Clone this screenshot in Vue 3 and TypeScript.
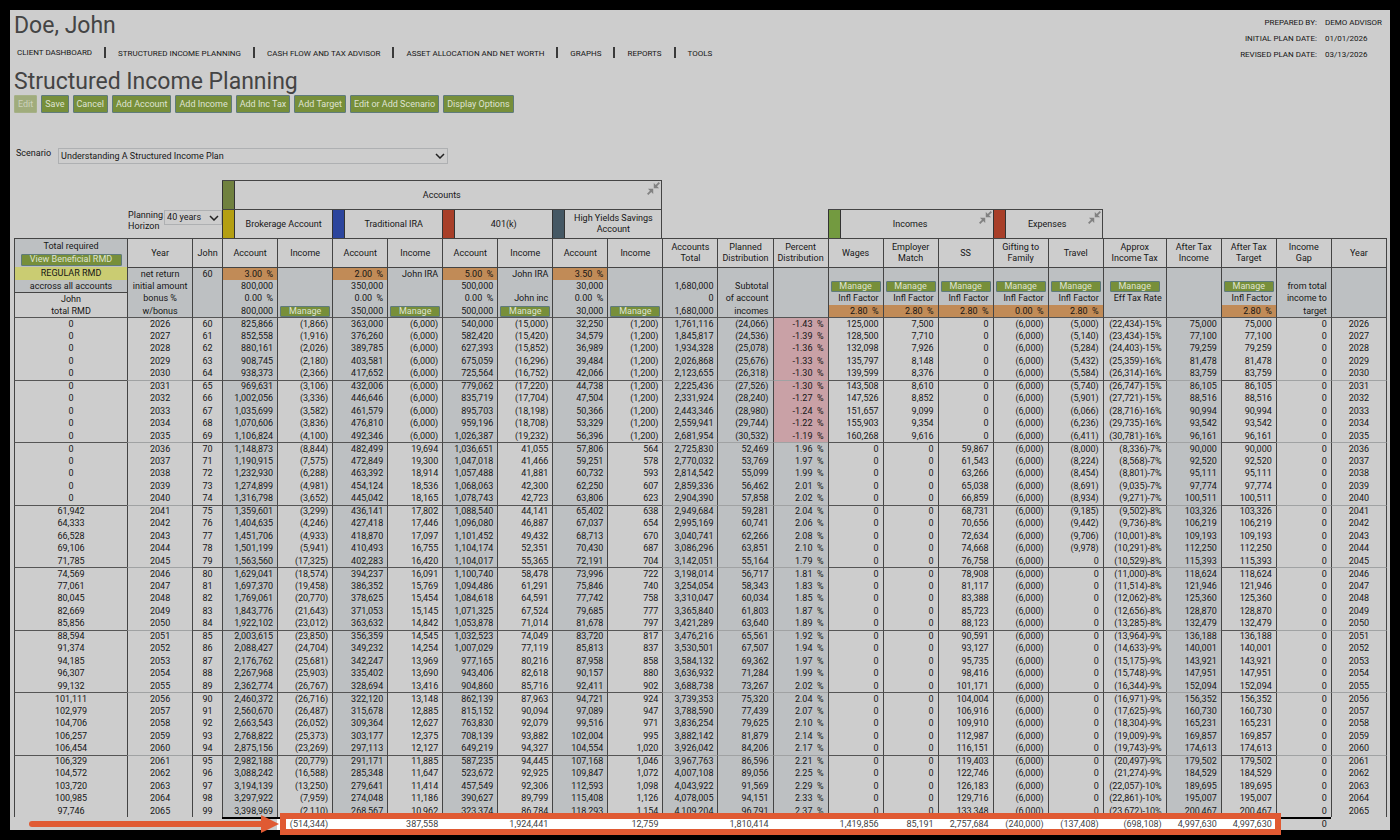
<script setup lang="ts">
import { ref } from 'vue'

interface Column {
  head: string[]
  kind: string
  setup: string[]
  foot: string
}

const menu: string[] = [
  'CLIENT DASHBOARD',
  'STRUCTURED INCOME PLANNING',
  'CASH FLOW AND TAX ADVISOR',
  'ASSET ALLOCATION AND NET WORTH',
  'GRAPHS',
  'REPORTS',
  'TOOLS',
]

const actions: string[] = [
  'Edit',
  'Save',
  'Cancel',
  'Add Account',
  'Add Income',
  'Add Inc Tax',
  'Add Target',
  'Edit or Add Scenario',
  'Display Options',
]

const scenario = ref('Understanding A Structured Income Plan')
const horizon = ref('40 years')

const M = 'Manage'
const F = 'Infl Factor'

const columns: Column[] = [
  { head: ['Year'], kind: 'year', setup: ['net return', 'initial amount', 'bonus %', 'w/bonus'], foot: '' },
  { head: ['John'], kind: 'age', setup: ['60', '', '', ''], foot: '' },
  { head: ['Account'], kind: 'money shade', setup: ['3.00  %', '800,000', '0.00  %', '800,000'], foot: '' },
  { head: ['Income'], kind: 'money', setup: ['', '', '', M], foot: '(514,344)' },
  { head: ['Account'], kind: 'money shade', setup: ['2.00  %', '350,000', '0.00  %', '350,000'], foot: '' },
  { head: ['Income'], kind: 'money', setup: ['John IRA', '', '', M], foot: '387,558' },
  { head: ['Account'], kind: 'money shade', setup: ['5.00  %', '500,000', '0.00  %', '500,000'], foot: '' },
  { head: ['Income'], kind: 'money', setup: ['John IRA', '', 'John inc', M], foot: '1,924,441' },
  { head: ['Account'], kind: 'money shade', setup: ['3.50  %', '30,000', '0.00  %', '30,000'], foot: '' },
  { head: ['Income'], kind: 'money', setup: ['', '', '', M], foot: '12,759' },
  { head: ['Accounts', 'Total'], kind: 'money shade soft', setup: ['', '1,680,000', '0', '1,680,000'], foot: '' },
  { head: ['Planned', 'Distribution'], kind: 'money shade soft', setup: ['', 'Subtotal', 'of account', 'incomes'], foot: '1,810,414' },
  { head: ['Percent', 'Distribution'], kind: 'money shade soft', setup: ['', '', '', ''], foot: '' },
  { head: ['Wages'], kind: 'money', setup: ['', M, F, '2.80  %'], foot: '1,419,856' },
  { head: ['Employer', 'Match'], kind: 'money', setup: ['', M, F, '2.80  %'], foot: '85,191' },
  { head: ['SS'], kind: 'money', setup: ['', M, F, '2.80  %'], foot: '2,757,684' },
  { head: ['Gifting to', 'Family'], kind: 'money', setup: ['', M, F, '0.00  %'], foot: '(240,000)' },
  { head: ['Travel'], kind: 'money', setup: ['', M, F, '2.80  %'], foot: '(137,408)' },
  { head: ['Approx', 'Income Tax'], kind: 'money', setup: ['', M, 'Eff Tax Rate', ''], foot: '(698,108)' },
  { head: ['After Tax', 'Income'], kind: 'money shade soft', setup: ['', '', '', ''], foot: '4,997,630' },
  { head: ['After Tax', 'Target'], kind: 'money', setup: ['', M, F, '2.80  %'], foot: '4,997,630' },
  { head: ['Income', 'Gap'], kind: 'money soft', setup: ['', 'from total', 'income to', 'target'], foot: '0' },
  { head: ['Year'], kind: 'year', setup: ['', '', '', ''], foot: '' },
]

const rmdSetup: string[] = ['REGULAR RMD', 'accross all accounts', 'John', 'total RMD']

// RMD, four account/income pairs, total, planned, percent, wages, match, SS, travel, tax, after tax income
const ledger = `
0 825,866 (1,866) 363,000 (6,000) 540,000 (15,000) 32,250 (1,200) 1,761,116 (24,066) -1.43 125,000 7,500 0 (5,000) (22,434)-15% 75,000
0 852,558 (1,916) 376,260 (6,000) 582,420 (15,420) 34,579 (1,200) 1,845,817 (24,536) -1.39 128,500 7,710 0 (5,140) (23,434)-15% 77,100
0 880,161 (2,026) 389,785 (6,000) 627,393 (15,852) 36,989 (1,200) 1,934,328 (25,078) -1.36 132,098 7,926 0 (5,284) (24,403)-15% 79,259
0 908,745 (2,180) 403,581 (6,000) 675,059 (16,296) 39,484 (1,200) 2,026,868 (25,676) -1.33 135,797 8,148 0 (5,432) (25,359)-16% 81,478
0 938,373 (2,366) 417,652 (6,000) 725,564 (16,752) 42,066 (1,200) 2,123,655 (26,318) -1.30 139,599 8,376 0 (5,584) (26,314)-16% 83,759
0 969,631 (3,106) 432,006 (6,000) 779,062 (17,220) 44,738 (1,200) 2,225,436 (27,526) -1.30 143,508 8,610 0 (5,740) (26,747)-15% 86,105
0 1,002,056 (3,336) 446,646 (6,000) 835,719 (17,704) 47,504 (1,200) 2,331,924 (28,240) -1.27 147,526 8,852 0 (5,901) (27,721)-15% 88,516
0 1,035,699 (3,582) 461,579 (6,000) 895,703 (18,198) 50,366 (1,200) 2,443,346 (28,980) -1.24 151,657 9,099 0 (6,066) (28,716)-16% 90,994
0 1,070,606 (3,836) 476,810 (6,000) 959,196 (18,708) 53,329 (1,200) 2,559,941 (29,744) -1.22 155,903 9,354 0 (6,236) (29,735)-16% 93,542
0 1,106,824 (4,100) 492,346 (6,000) 1,026,387 (19,232) 56,396 (1,200) 2,681,954 (30,532) -1.19 160,268 9,616 0 (6,411) (30,781)-16% 96,161
0 1,148,873 (8,844) 482,499 19,694 1,036,651 41,055 57,806 564 2,725,830 52,469 1.96 0 0 59,867 (8,000) (8,336)-7% 90,000
0 1,190,915 (7,575) 472,849 19,300 1,047,018 41,466 59,251 578 2,770,032 53,769 1.97 0 0 61,543 (8,224) (8,568)-7% 92,520
0 1,232,930 (6,288) 463,392 18,914 1,057,488 41,881 60,732 593 2,814,542 55,099 1.99 0 0 63,266 (8,454) (8,801)-7% 95,111
0 1,274,899 (4,981) 454,124 18,536 1,068,063 42,300 62,250 607 2,859,336 56,462 2.01 0 0 65,038 (8,691) (9,035)-7% 97,774
0 1,316,798 (3,652) 445,042 18,165 1,078,743 42,723 63,806 623 2,904,390 57,858 2.02 0 0 66,859 (8,934) (9,271)-7% 100,511
61,942 1,359,601 (3,299) 436,141 17,802 1,088,540 44,141 65,402 638 2,949,684 59,281 2.04 0 0 68,731 (9,185) (9,502)-8% 103,326
64,333 1,404,635 (4,246) 427,418 17,446 1,096,080 46,887 67,037 654 2,995,169 60,741 2.06 0 0 70,656 (9,442) (9,736)-8% 106,219
66,528 1,451,706 (4,933) 418,870 17,097 1,101,452 49,432 68,713 670 3,040,741 62,266 2.08 0 0 72,634 (9,706) (10,001)-8% 109,193
69,106 1,501,199 (5,941) 410,493 16,755 1,104,174 52,351 70,430 687 3,086,296 63,851 2.10 0 0 74,668 (9,978) (10,291)-8% 112,250
71,785 1,563,560 (17,325) 402,283 16,420 1,104,017 55,365 72,191 704 3,142,051 55,164 1.79 0 0 76,758 0 (10,529)-8% 115,393
74,569 1,629,041 (18,574) 394,237 16,091 1,100,740 58,478 73,996 722 3,198,014 56,717 1.81 0 0 78,908 0 (11,000)-8% 118,624
77,061 1,697,370 (19,458) 386,352 15,769 1,094,486 61,291 75,846 740 3,254,054 58,343 1.83 0 0 81,117 0 (11,514)-8% 121,946
80,045 1,769,061 (20,770) 378,625 15,454 1,084,618 64,591 77,742 758 3,310,047 60,034 1.85 0 0 83,388 0 (12,062)-8% 125,360
82,669 1,843,776 (21,643) 371,053 15,145 1,071,325 67,524 79,685 777 3,365,840 61,803 1.87 0 0 85,723 0 (12,656)-8% 128,870
85,856 1,922,102 (23,012) 363,632 14,842 1,053,878 71,014 81,678 797 3,421,289 63,640 1.89 0 0 88,123 0 (13,285)-8% 132,479
88,594 2,003,615 (23,850) 356,359 14,545 1,032,523 74,049 83,720 817 3,476,216 65,561 1.92 0 0 90,591 0 (13,964)-9% 136,188
91,374 2,088,427 (24,704) 349,232 14,254 1,007,029 77,119 85,813 837 3,530,501 67,507 1.94 0 0 93,127 0 (14,633)-9% 140,001
94,185 2,176,762 (25,681) 342,247 13,969 977,165 80,216 87,958 858 3,584,132 69,362 1.97 0 0 95,735 0 (15,175)-9% 143,921
96,307 2,267,968 (25,903) 335,402 13,690 943,406 82,618 90,157 880 3,636,932 71,284 1.99 0 0 98,416 0 (15,748)-9% 147,951
99,132 2,362,774 (26,767) 328,694 13,416 904,860 85,716 92,411 902 3,688,738 73,267 2.02 0 0 101,171 0 (16,344)-9% 152,094
101,111 2,460,372 (26,716) 322,120 13,148 862,139 87,963 94,721 924 3,739,353 75,320 2.04 0 0 104,004 0 (16,971)-9% 156,352
102,979 2,560,670 (26,487) 315,678 12,885 815,152 90,094 97,089 947 3,788,590 77,439 2.07 0 0 106,916 0 (17,625)-9% 160,730
104,706 2,663,543 (26,052) 309,364 12,627 763,830 92,079 99,516 971 3,836,254 79,625 2.10 0 0 109,910 0 (18,304)-9% 165,231
106,257 2,768,822 (25,373) 303,177 12,375 708,139 93,882 102,004 995 3,882,142 81,879 2.14 0 0 112,987 0 (19,009)-9% 169,857
106,454 2,875,156 (23,269) 297,113 12,127 649,219 94,327 104,554 1,020 3,926,042 84,206 2.17 0 0 116,151 0 (19,743)-9% 174,613
106,329 2,982,188 (20,779) 291,171 11,885 587,235 94,445 107,168 1,046 3,967,763 86,596 2.21 0 0 119,403 0 (20,497)-9% 179,502
104,572 3,088,242 (16,588) 285,348 11,647 523,672 92,925 109,847 1,072 4,007,108 89,056 2.25 0 0 122,746 0 (21,274)-9% 184,529
103,720 3,194,139 (13,250) 279,641 11,414 457,549 92,306 112,593 1,098 4,043,922 91,569 2.29 0 0 126,183 0 (22,057)-10% 189,695
100,985 3,297,922 (7,959) 274,048 11,186 390,627 89,799 115,408 1,126 4,078,005 94,151 2.33 0 0 129,716 0 (22,861)-10% 195,007
97,746 3,398,969 (2,110) 268,567 10,962 323,374 86,784 118,293 1,154 4,109,204 96,791 2.37 0 0 133,348 0 (23,672)-10% 200,467
`

const rows: string[][] = ledger
  .trim()
  .split('\n')
  .map((line, i) => {
    const v = line.split(' ')
    const year = String(2026 + i)
    return [
      v[0],
      year,
      String(60 + i),
      ...v.slice(1, 11),
      `${v[11]}  %`,
      ...v.slice(12, 15),
      '(6,000)',
      v[15],
      v[16],
      v[17],
      v[17],
      '0',
      year,
    ]
  })

const inFrame = (i: number): boolean => i >= 3 && i <= 20
const isRate = (text: string, row: number): boolean =>
  text.endsWith('  %') && row !== 2
</script>

<template>
  <main class="panel">
    <header class="top">
      <div>
        <h2 class="client">Doe, John</h2>
        <nav class="menu">
          <a v-for="item in menu" :key="item" href="#">{{ item }}</a>
        </nav>
      </div>
      <dl class="meta">
        <dt>PREPARED BY:</dt>
        <dd>DEMO ADVISOR</dd>
        <dt>INITIAL PLAN DATE:</dt>
        <dd>01/01/2026</dd>
        <dt>REVISED PLAN DATE:</dt>
        <dd>03/13/2026</dd>
      </dl>
    </header>

    <h1 class="title">Structured Income Planning</h1>

    <div class="actions">
      <button v-for="(a, i) in actions" :key="a" type="button" class="btn" :disabled="i === 0">{{ a }}</button>
    </div>

    <div class="scenario">
      <label for="scenario">Scenario</label>
      <span class="picker wide">
        <select id="scenario" v-model="scenario">
          <option>Understanding A Structured Income Plan</option>
        </select>
        <svg viewBox="0 0 10 6"><path d="M1 1l4 4 4-4" /></svg>
      </span>
    </div>

    <div class="sheet">
      <table>
        <colgroup>
          <col class="c-rmd" />
          <col class="c-year" />
          <col class="c-age" />
          <col v-for="n in 15" :key="n" class="c-money" />
          <col class="c-money" />
          <col class="c-tax" />
          <col v-for="n in 3" :key="'t' + n" class="c-money" />
          <col class="c-last" />
        </colgroup>
        <thead>
          <tr class="band">
            <td colspan="3"></td>
            <th colspan="8" class="group end">
              <div class="tag foldable">
                <i class="swatch olive"></i>
                <span>Accounts</span>
                <svg class="collapse" viewBox="0 0 14 14">
                  <path class="stem" d="M13.300 .700L9.500 4.500M.700 13.300l3.800-3.800" />
                  <path class="tip" d="M7.300 1v5.700H13zM6.700 13V7.300H1z" />
                </svg>
              </div>
            </th>
            <td colspan="13"></td>
          </tr>
          <tr class="band">
            <td colspan="3">
              <div class="horizon">
                <label for="horizon">Planning<br />Horizon</label>
                <span class="picker">
                  <select id="horizon" v-model="horizon">
                    <option>40 years</option>
                  </select>
                  <svg viewBox="0 0 10 6"><path d="M1 1l4 4 4-4" /></svg>
                </span>
              </div>
            </td>
            <th colspan="2" class="group"><div class="tag"><i class="swatch gold"></i><span>Brokerage Account</span></div></th>
            <th colspan="2" class="group"><div class="tag"><i class="swatch blue"></i><span>Traditional IRA</span></div></th>
            <th colspan="2" class="group"><div class="tag"><i class="swatch red"></i><span>401(k)</span></div></th>
            <th colspan="2" class="group end"><div class="tag"><i class="swatch slate"></i><span>High Yields Savings Account</span></div></th>
            <td colspan="3"></td>
            <th colspan="3" class="group">
              <div class="tag foldable">
                <i class="swatch green"></i>
                <span>Incomes</span>
                <svg class="collapse" viewBox="0 0 14 14">
                  <path class="stem" d="M13.300 .700L9.500 4.500M.700 13.300l3.800-3.800" />
                  <path class="tip" d="M7.300 1v5.700H13zM6.700 13V7.300H1z" />
                </svg>
              </div>
            </th>
            <th colspan="2" class="group end">
              <div class="tag foldable">
                <i class="swatch red"></i>
                <span>Expenses</span>
                <svg class="collapse" viewBox="0 0 14 14">
                  <path class="stem" d="M13.300 .700L9.500 4.500M.700 13.300l3.800-3.800" />
                  <path class="tip" d="M7.300 1v5.700H13zM6.700 13V7.300H1z" />
                </svg>
              </div>
            </th>
            <td colspan="5"></td>
          </tr>
          <tr class="heads">
            <th class="rmd shade">
              Total required
              <button type="button" class="btn mini long">View Beneficial RMD</button>
            </th>
            <th v-for="(c, i) in columns" :key="i">
              <template v-for="(line, j) in c.head" :key="j"><br v-if="j" />{{ line }}</template>
            </th>
          </tr>
        </thead>
        <tbody class="setup">
          <tr v-for="(label, r) in rmdSetup" :key="r">
            <td class="rmd" :class="{ notice: r === 0, shade: r === 1, ruled: r === 2 }">{{ label }}</td>
            <td v-for="(c, i) in columns" :key="i" :class="[c.kind, { rate: isRate(c.setup[r], r) }]">
              <button v-if="c.setup[r] === 'Manage'" type="button" class="btn mini">Manage</button>
              <template v-else>{{ c.setup[r] }}</template>
            </td>
          </tr>
        </tbody>
        <tbody class="years">
          <tr v-for="(row, r) in rows" :key="r">
            <td
              v-for="(cell, i) in row"
              :key="i"
              :class="[i === 0 ? 'rmd' : columns[i - 1].kind, { loss: i === 13 && cell.startsWith('-') }]"
            >{{ cell }}</td>
          </tr>
        </tbody>
        <tfoot>
          <tr>
            <td></td>
            <td
              v-for="(c, i) in columns"
              :key="i"
              :class="{ lit: inFrame(i), sum: i >= 2 && i <= 21 }"
            >{{ c.foot }}</td>
          </tr>
        </tfoot>
      </table>
      <div class="frame"></div>
      <svg class="arrow" viewBox="0 0 252 20">
        <path d="M4 10H236" />
        <path class="head" d="M233 1L251 10L233 19z" />
      </svg>
    </div>
  </main>
</template>

<style>
html,
body {
  margin: 0;
  background: #000;
}
</style>

<style scoped>
* {
  box-sizing: border-box;
}
.panel {
  margin: 10px;
  padding: 0 3px 0 4px;
  background: #cdcdcd;
  color: #161616;
  font: 400 9px/11px Roboto, "Liberation Sans", sans-serif;
}
.top {
  display: flex;
  justify-content: space-between;
}
h1,
h2 {
  margin: 0;
  font-size: 23px;
  font-weight: 400;
  color: #444;
}
.client {
  padding-top: 1px;
  line-height: 30px;
}
.title {
  line-height: 26px;
  padding-top: 3px;
}
.menu {
  display: flex;
  padding: 6px 3px;
}
.menu a {
  color: #161616;
  text-decoration: none;
  font-size: 8px;
  line-height: 12px;
}
.menu a + a::before {
  content: "";
  display: inline-block;
  width: 2px;
  height: 11px;
  margin: 0 12px;
  vertical-align: -2px;
  background: #3a3a3a;
}
.meta {
  display: grid;
  grid-template-columns: auto auto;
  column-gap: 8px;
  margin: 5px 5px 0 0;
  font-size: 8px;
  line-height: 16px;
  align-content: start;
}
.meta dt {
  text-align: right;
}
.meta dd {
  margin: 0;
}
.btn {
  font: inherit;
  height: 18px;
  padding: 0 3px;
  border: 1px solid #5f7b7c;
  border-radius: 1px;
  background: #778f3a;
  color: #dfe3d2;
  white-space: nowrap;
}
.btn:disabled {
  background: #a0ac7c;
  border-color: #a6b188;
  color: #cdd2bd;
}
.actions {
  display: flex;
  gap: 4px;
  padding-bottom: 35px;
}
.scenario {
  display: flex;
  gap: 7px;
  padding: 0 0 16px 2px;
}
.picker {
  position: relative;
  display: flex;
  height: 16px;
}
.wide {
  width: 390px;
}
.picker select {
  appearance: none;
  width: 100%;
  padding: 0 14px 0 2px;
  border: 1px solid #aeb0b2;
  border-radius: 0;
  background: transparent;
  color: inherit;
  font: inherit;
}
.picker svg {
  position: absolute;
  right: 3px;
  top: 5px;
  width: 10px;
  height: 6px;
  fill: none;
  stroke: #222;
  stroke-width: 1.500;
  pointer-events: none;
}
.sheet {
  position: relative;
}
table {
  width: 100%;
  table-layout: fixed;
  border-spacing: 0;
}
.c-rmd { width: 113px; }
.c-year { width: 65px; }
.c-age { width: 30px; }
.c-money { width: 55px; }
.c-tax { width: 63px; }
.c-last { width: 56px; }
th,
td {
  padding: 0;
  font-weight: 400;
  white-space: pre;
}
.band {
  height: 29px;
}
.group {
  border-top: 1px solid #444;
}
.end {
  border-right: 1px solid #444;
}
.tag {
  position: relative;
  display: flex;
  align-items: center;
  height: 28px;
}
.foldable {
  padding-right: 13px;
}
.tag span {
  flex: 1;
  padding: 0 4px;
  text-align: center;
  white-space: normal;
}
.swatch {
  width: 13px;
  height: 100%;
  border: solid #333;
  border-width: 0 1px;
}
.olive { background: #70813f; }
.gold { background: #b49f12; }
.blue { background: #2c459d; }
.red { background: #a83f29; }
.slate { background: #455864; }
.green { background: #739a40; }
.collapse {
  position: absolute;
  right: 1px;
  top: 1px;
  width: 13px;
  height: 13px;
}
.stem {
  fill: none;
  stroke: #828282;
  stroke-width: 2;
}
.tip {
  fill: #828282;
}
.horizon {
  display: flex;
  justify-content: flex-end;
  height: 28px;
}
.horizon label {
  width: 36px;
}
.horizon .picker {
  width: 58px;
  height: 15px;
}
.heads {
  height: 29px;
}
.heads th {
  border-top: 1px solid #444;
  border-left: 1px solid #444;
}
.heads th:last-child,
.setup td:last-child,
.years td:last-child {
  border-right: 1px solid #444;
}
.heads .rmd {
  white-space: normal;
}
.mini {
  display: block;
  width: 50px;
  height: 11px;
  margin: 0 auto;
  padding: 0;
  line-height: 9px;
}
.long {
  width: 101px;
  height: 12px;
  margin-top: 2px;
}
.setup td,
.years td {
  border-left: 1px solid #444;
  text-align: center;
}
.setup tr,
.years tr {
  height: 12px;
}
.setup tr:nth-child(odd),
.years tr:nth-child(odd) {
  height: 13px;
}
.setup td {
  background: #bdc0c2;
}
.shade {
  background: #bdc0c2;
}
.setup .rmd {
  background: #cdcdcd;
}
.setup .rmd.shade {
  background: #bdc0c2;
}
.setup .rmd.notice {
  background: #cacc72;
}
.setup .rmd.ruled,
.setup tr:first-child td:not(.rmd) {
  border-top: 1px solid #444;
}
.setup .rate {
  background: #c18b57;
}
.setup .money,
.years .money {
  padding-right: 4px;
  text-align: right;
}
.setup .money:has(.mini) {
  padding-right: 0;
}
.years tr:nth-child(5n + 1) td {
  border-top: 1px solid #555;
}
.years tr:nth-child(5n + 6) .soft,
.years tr:nth-child(5n + 6) .year {
  border-top-color: #a0a2a3;
}
.years .loss {
  background: #c9a1a6;
}
tfoot tr {
  height: 13px;
}
tfoot td {
  padding-right: 4px;
  text-align: right;
}
.sum {
  border-top: 2px solid #000;
}
.lit {
  background: #fff;
  color: #444;
}
.frame {
  position: absolute;
  left: 266px;
  right: 106px;
  bottom: -5px;
  height: 22px;
  border: 6px solid #e05a33;
}
.arrow {
  position: absolute;
  left: 14px;
  bottom: -4px;
  width: 252px;
  height: 20px;
  fill: none;
  stroke: #e05a33;
  stroke-width: 6;
  stroke-linecap: round;
}
.head {
  fill: #e05a33;
  stroke: none;
}
</style>
